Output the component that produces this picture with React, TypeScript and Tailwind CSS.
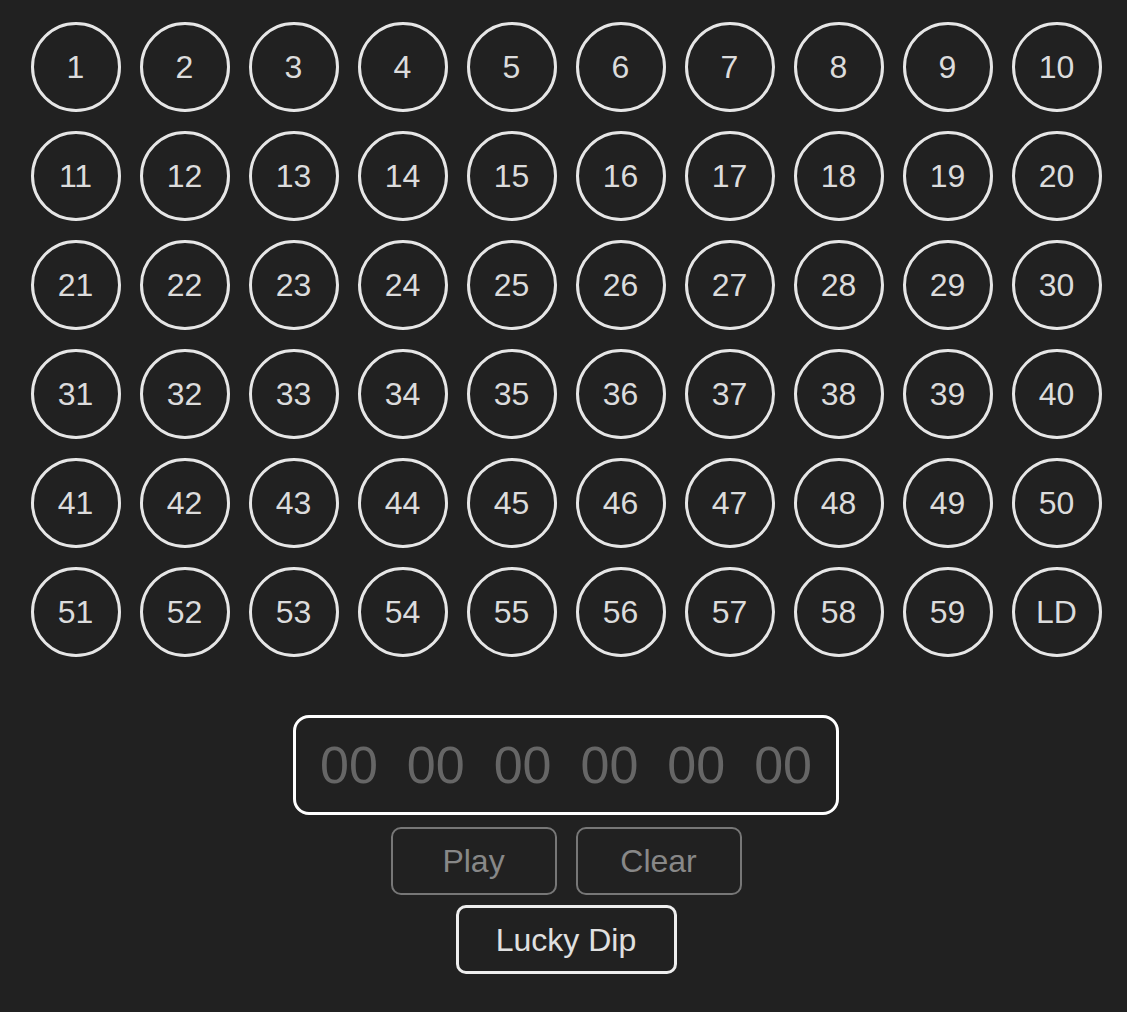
import React from "react";

const cells: string[] = [...Array.from({ length: 59 }, (_, i) => String(i + 1)), "LD"];

export default function App() {
  return (
    <div className="min-h-[1012px] w-full bg-[#212121] pt-[22px] font-['Liberation_Sans',Arial,sans-serif]">
      <div className="ml-[31px] flex w-[1070px] flex-col items-center">
        <div className="grid grid-cols-[repeat(10,90px)] gap-[19px]">
          {cells.map((c) => (
            <button
              key={c}
              className="flex h-[90px] w-[90px] items-center justify-center rounded-full border-[3px] border-[#e6e6e6] text-[32px] leading-none text-[#dcdcdc]"
            >
              {c}
            </button>
          ))}
        </div>
        <div className="mt-[58px] flex h-[100px] w-[546px] items-center justify-center gap-[29px] rounded-[16px] border-[3px] border-white text-[52px] leading-none text-[#666666]">
          {Array.from({ length: 6 }).map((_, i) => (
            <span key={i}>00</span>
          ))}
        </div>
        <div className="mt-[12px] flex gap-[19px]">
          <button className="h-[68px] w-[166px] rounded-[10px] border-2 border-[#777777] text-[32px] text-[#888888]">
            Play
          </button>
          <button className="h-[68px] w-[166px] rounded-[10px] border-2 border-[#777777] text-[32px] text-[#888888]">
            Clear
          </button>
        </div>
        <button className="mt-[10px] h-[69px] w-[221px] rounded-[10px] border-[3px] border-[#eeeeee] text-[32px] text-[#e0e0e0]">
          Lucky Dip
        </button>
      </div>
    </div>
  );
}
